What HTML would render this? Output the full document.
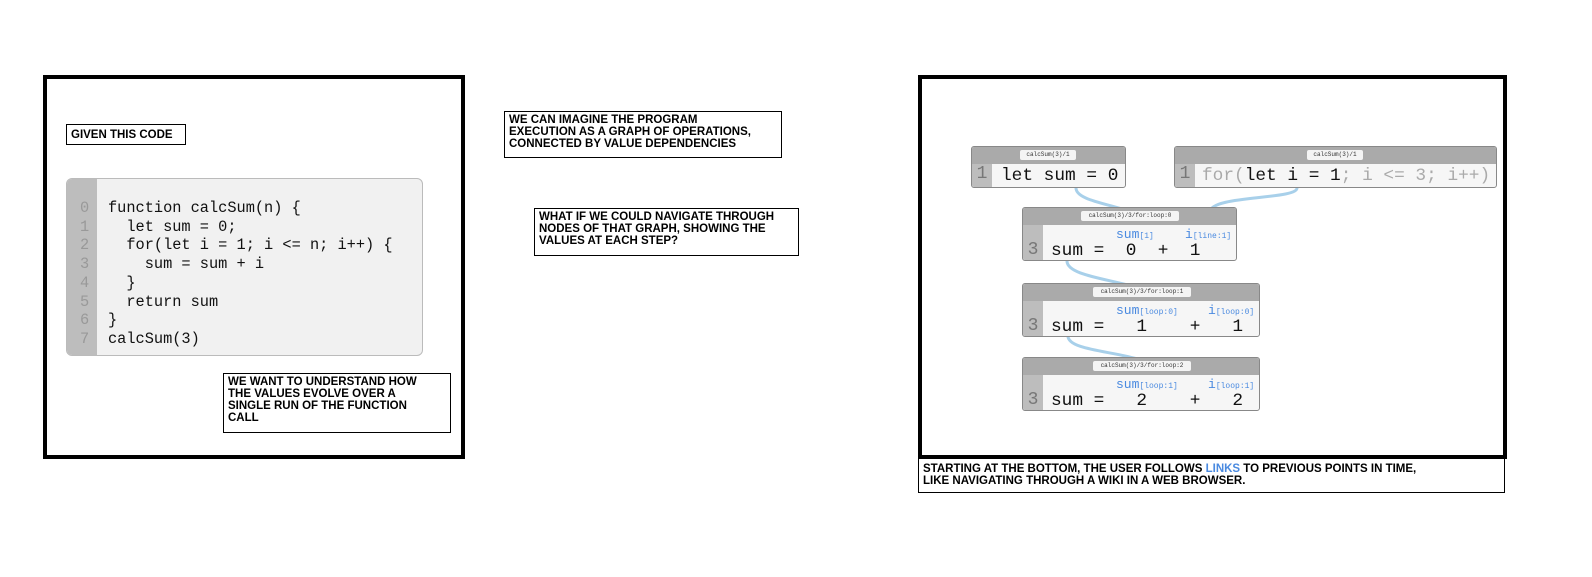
<!DOCTYPE html>
<html style="overflow:hidden;width:1592px;height:577px"><head><style>
body{margin:0;width:1592px;height:577px;background:#fff;position:relative;overflow:hidden;font-family:"Liberation Sans",sans-serif}
.a{position:absolute;box-sizing:border-box}
.panel{border:4px solid #000}
.cap{border:1.5px solid #000;background:#fff;font-size:11.5px;font-weight:bold;text-transform:uppercase;line-height:12px;padding:2px 4px;white-space:nowrap;overflow:hidden}
.code{background:#f1f1f1;border:1px solid #bbb;border-radius:6px;overflow:hidden}
.gut{background:#bdbdbd}
.ln{position:absolute;font-family:"Liberation Mono",monospace;font-size:15.3px;white-space:pre;line-height:18.7px}
.node{border:1px solid #888;border-radius:3px;overflow:hidden;background:#f6f6f6}
.nh{position:absolute;left:0;right:0;top:0;height:17px;background:#aaa}
.tag{position:absolute;top:3px;height:10px;background:#f4f4f4;border-radius:2px;font-family:"Liberation Mono",monospace;font-size:6px;line-height:10px;text-align:center;color:#333}
.ng{position:absolute;left:0;width:20px;bottom:0;background:#bdbdbd;color:#777;font-family:"Liberation Mono",monospace;font-size:18px;text-align:center}
.t{position:absolute;font-family:"Liberation Mono",monospace;font-size:17.8px;white-space:pre;color:#111}
.b{position:absolute;font-family:"Liberation Mono",monospace;color:#4a8ae0;white-space:pre;font-size:13px}
.b small{font-size:8px}
</style></head><body>
<div class="a panel" style="left:43px;top:75px;width:422px;height:384px"></div>
<div class="a cap" style="left:66px;top:124px;width:120px;height:21px;padding-top:4px">Given this code</div>
<div class="a code" style="left:66px;top:178px;width:357px;height:178px"><div class="a gut" style="left:0;top:0;width:30px;height:178px"></div></div>
<div class="ln" style="left:80px;top:199px;color:#999">0
1
2
3
4
5
6
7</div>
<div class="ln" style="left:108px;top:199px;color:#111">function calcSum(n) {
  let sum = 0;
  for(let i = 1; i &lt;= n; i++) {
    sum = sum + i
  }
  return sum
}
calcSum(3)</div>
<div class="a cap" style="left:223px;top:373px;width:228px;height:60px">We want to understand how<br>the values evolve over a<br>single run of the function<br>call</div>
<div class="a cap" style="left:504px;top:111px;width:278px;height:47px">We can imagine the program<br>execution as a graph of operations,<br>connected by value dependencies</div>
<div class="a cap" style="left:534px;top:208px;width:265px;height:48px">What if we could navigate through<br>nodes of that graph, showing the<br>values at each step?</div>

<div class="a panel" style="left:918px;top:75px;width:589px;height:384px"></div>
<div class="a cap" style="left:918px;top:458px;width:587px;height:35px;padding-top:4px">Starting at the bottom, the user follows <span style="color:#4a8ae0">links</span> to previous points in time,<br>like navigating through a wiki in a web browser.</div>

<svg class="a" style="left:0;top:0" width="1590" height="570">
<g fill="none" stroke="#a8d0ea" stroke-width="3">
<path d="M1076 188 C1076 205 1140 205 1150 225"/>
<path d="M1297 188 C1297 200 1210 195 1210 212"/>
<path d="M1067 261 C1067 280 1140 280 1158 298"/>
<path d="M1068 336 C1068 355 1150 350 1160 373"/>
</g></svg>

<div class="a node" style="left:971px;top:146px;width:155px;height:42px"><div class="nh"></div><div class="tag" style="left:48px;width:56px">calcSum(3)/1</div><div class="ng" style="top:17px">1</div><div class="t" style="left:29px;top:19px">let sum = 0</div></div>
<div class="a node" style="left:1174px;top:146px;width:323px;height:42px"><div class="nh"></div><div class="tag" style="left:132px;width:56px">calcSum(3)/1</div><div class="ng" style="top:17px">1</div><div class="t" style="left:27px;top:19px"><span style="color:#aaa">for(</span>let i = 1<span style="color:#aaa">; i &lt;= 3; i++)</span></div></div>
<div class="a node" style="left:1022px;top:207px;width:215px;height:54px"><div class="nh"></div><div class="tag" style="left:58px;width:98px">calcSum(3)/3/for:loop:0</div><div class="ng" style="top:17px;padding-top:15px">3</div><div class="b" style="left:93px;top:19px">sum<small>[1]</small></div><div class="b" style="left:162px;top:19px">i<small>[line:1]</small></div><div class="t" style="left:28px;top:33px">sum =  0  +  1</div></div>
<div class="a node" style="left:1022px;top:283px;width:238px;height:54px"><div class="nh"></div><div class="tag" style="left:70px;width:98px">calcSum(3)/3/for:loop:1</div><div class="ng" style="top:17px;padding-top:15px">3</div><div class="b" style="left:93px;top:19px">sum<small>[loop:0]</small></div><div class="b" style="left:185px;top:19px">i<small>[loop:0]</small></div><div class="t" style="left:28px;top:33px">sum =   1    +   1</div></div>
<div class="a node" style="left:1022px;top:357px;width:238px;height:54px"><div class="nh"></div><div class="tag" style="left:70px;width:98px">calcSum(3)/3/for:loop:2</div><div class="ng" style="top:17px;padding-top:15px">3</div><div class="b" style="left:93px;top:19px">sum<small>[loop:1]</small></div><div class="b" style="left:185px;top:19px">i<small>[loop:1]</small></div><div class="t" style="left:28px;top:33px">sum =   2    +   2</div></div>
</body></html>
